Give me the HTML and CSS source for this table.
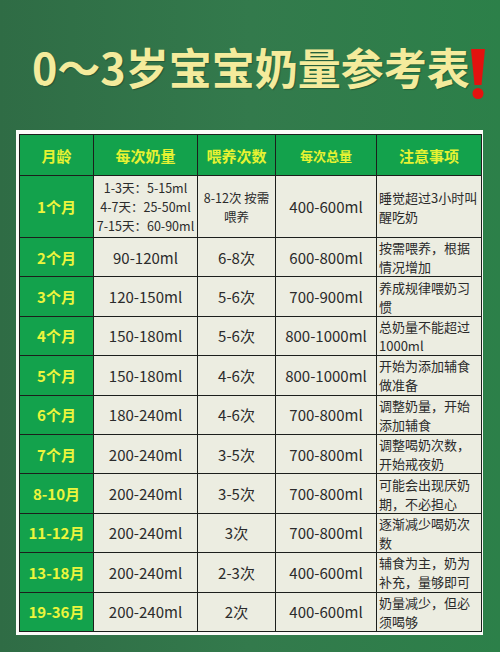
FILE: index.html
```html
<!DOCTYPE html>
<html lang="zh">
<head>
<meta charset="utf-8">
<link rel="stylesheet" href="styles.css">
</head>
<body>
<div class="page">
  <div class="title-bar">
    <h1 class="title">0～3岁宝宝奶量参考表</h1>
    <svg class="bang" width="17" height="52" viewBox="0 0 17 52"><path d="M1 0 H15 L11.5 36 H4.5 Z" fill="#e3120f"/><circle cx="8" cy="44.5" r="5.5" fill="#e3120f"/></svg>
  </div>
  <div class="panel">
    <div class="grid">
      <div class="c h">月龄</div>
      <div class="c h">每次奶量</div>
      <div class="c h">喂养次数</div>
      <div class="c h sm">每次总量</div>
      <div class="c h">注意事项</div>

      <div class="c m">1个月</div>
      <div class="c small"><div>1-3天：5-15ml<br>4-7天：25-50ml<br>7-15天：60-90ml</div></div>
      <div class="c small"><div>8-12次 按需<br>喂养</div></div>
      <div class="c">400-600ml</div>
      <div class="c n"><div>睡觉超过3小时叫<br>醒吃奶</div></div>

      <div class="c m">2个月</div><div class="c">90-120ml</div><div class="c">6-8次</div><div class="c">600-800ml</div>
      <div class="c n"><div>按需喂养，根据<br>情况增加</div></div>

      <div class="c m">3个月</div><div class="c">120-150ml</div><div class="c">5-6次</div><div class="c">700-900ml</div>
      <div class="c n"><div>养成规律喂奶习<br>惯</div></div>

      <div class="c m">4个月</div><div class="c">150-180ml</div><div class="c">5-6次</div><div class="c">800-1000ml</div>
      <div class="c n"><div>总奶量不能超过<br>1000ml</div></div>

      <div class="c m">5个月</div><div class="c">150-180ml</div><div class="c">4-6次</div><div class="c">800-1000ml</div>
      <div class="c n"><div>开始为添加辅食<br>做准备</div></div>

      <div class="c m">6个月</div><div class="c">180-240ml</div><div class="c">4-6次</div><div class="c">700-800ml</div>
      <div class="c n"><div>调整奶量，开始<br>添加辅食</div></div>

      <div class="c m">7个月</div><div class="c">200-240ml</div><div class="c">3-5次</div><div class="c">700-800ml</div>
      <div class="c n"><div>调整喝奶次数，<br>开始戒夜奶</div></div>

      <div class="c m">8-10月</div><div class="c">200-240ml</div><div class="c">3-5次</div><div class="c">700-800ml</div>
      <div class="c n"><div>可能会出现厌奶<br>期，不必担心</div></div>

      <div class="c m">11-12月</div><div class="c">200-240ml</div><div class="c">3次</div><div class="c">700-800ml</div>
      <div class="c n"><div>逐渐减少喝奶次<br>数</div></div>

      <div class="c m">13-18月</div><div class="c">200-240ml</div><div class="c">2-3次</div><div class="c">400-600ml</div>
      <div class="c n"><div>辅食为主，奶为<br>补充，量够即可</div></div>

      <div class="c m">19-36月</div><div class="c">200-240ml</div><div class="c">2次</div><div class="c">400-600ml</div>
      <div class="c n"><div>奶量减少，但必<br>须喝够</div></div>
    </div>
  </div>
</div>
</body>
</html>
```
FILE: styles.css
```css
html, body {
  margin: 0;
  padding: 0;
}
body {
  background: #31764a;
  font-family: "Noto Sans CJK SC", "Noto Sans", sans-serif;
}
.page {
  width: 500px;
  height: 652px;
  overflow: hidden;
  background: linear-gradient(90deg, #2f6c45 0%, #337a4c 50%, #2c8049 100%);
}
.title-bar {
  height: 130px;
  display: flex;
  align-items: flex-start;
  padding-left: 32px;
  box-sizing: border-box;
}
.title {
  margin: 36px 0 0 0;
  font-size: 43px;
  line-height: 60px;
  font-weight: 700;
  color: #f4eb9c;
  letter-spacing: 0;
  white-space: nowrap;
  text-shadow: 1px 1px 1px rgba(0,0,0,0.25);
}
.bang {
  margin-top: 49px;
  margin-left: 0px;
  flex: none;
}
.panel {
  margin-left: 16px;
  width: 467px;
  height: 505px;
  box-sizing: border-box;
  padding: 4px 2px 3px 3px;
  background: #fbfbf8;
}
.grid {
  display: grid;
  grid-template-columns: 73px 103px 77px 100px 104px;
  grid-template-rows: 40px 61px repeat(10, 38.4px);
  gap: 1px;
  padding: 1px;
  background: #1c1f1c;
  width: max-content;
}
.c {
  display: flex;
  align-items: center;
  justify-content: center;
  text-align: center;
  background: #ecede1;
  color: #2b2b2b;
  font-size: 15px;
  overflow: hidden;
  white-space: nowrap;
}
.h {
  background: #13a24c;
  color: #e6f232;
  font-weight: 700;
  font-size: 15px;
}
.h.sm {
  font-size: 13px;
}
.m {
  background: #13a24c;
  color: #ecf53c;
  font-weight: 700;
  font-size: 15px;
}
.small {
  font-size: 12.5px;
  line-height: 19px;
}
.n {
  justify-content: flex-start;
  text-align: left;
  padding-left: 2px;
  font-size: 13px;
  line-height: 19px;
}
.n > div {
  flex: none;
}
```
